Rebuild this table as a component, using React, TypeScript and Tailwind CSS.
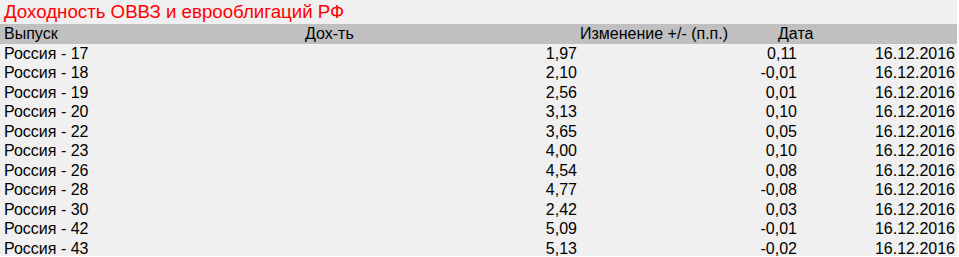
const rows = [
  { name: "Россия - 17", yld: "1,97", chg: "0,11", date: "16.12.2016" },
  { name: "Россия - 18", yld: "2,10", chg: "-0,01", date: "16.12.2016" },
  { name: "Россия - 19", yld: "2,56", chg: "0,01", date: "16.12.2016" },
  { name: "Россия - 20", yld: "3,13", chg: "0,10", date: "16.12.2016" },
  { name: "Россия - 22", yld: "3,65", chg: "0,05", date: "16.12.2016" },
  { name: "Россия - 23", yld: "4,00", chg: "0,10", date: "16.12.2016" },
  { name: "Россия - 26", yld: "4,54", chg: "0,08", date: "16.12.2016" },
  { name: "Россия - 28", yld: "4,77", chg: "-0,08", date: "16.12.2016" },
  { name: "Россия - 30", yld: "2,42", chg: "0,03", date: "16.12.2016" },
  { name: "Россия - 42", yld: "5,09", chg: "-0,01", date: "16.12.2016" },
  { name: "Россия - 43", yld: "5,13", chg: "-0,02", date: "16.12.2016" },
];

export default function App() {
  return (
    <div className="w-[959px] h-[257px] bg-white font-['Liberation_Sans',Arial,sans-serif]">
      <div className="w-[957px] h-[256px] bg-[#f0f0f0] text-black overflow-hidden">
        <div className="h-[24px] leading-[24px] text-[18.7px] text-[#ff0000] pl-[4px]">
          Доходность ОВВЗ и еврооблигаций РФ
        </div>
        <div className="flex h-[19.5px] leading-[19.5px] text-[16px] bg-[#c0c0c0] pl-[4px]">
          <div className="w-[301px]">Выпуск</div>
          <div className="w-[275px]">Дох-ть</div>
          <div className="w-[198px]">Изменение +/- (п.п.)</div>
          <div>Дата</div>
        </div>
        {rows.map((r) => (
          <div
            key={r.name}
            className="grid grid-cols-[303px_274px_220px_156px] h-[19.5px] leading-[19.5px] text-[16px] pl-[4px]"
          >
            <div>{r.name}</div>
            <div className="text-right pr-[4px]">{r.yld}</div>
            <div className="text-right pr-[4px]">{r.chg}</div>
            <div className="text-right pr-[2px]">{r.date}</div>
          </div>
        ))}
      </div>
    </div>
  );
}
